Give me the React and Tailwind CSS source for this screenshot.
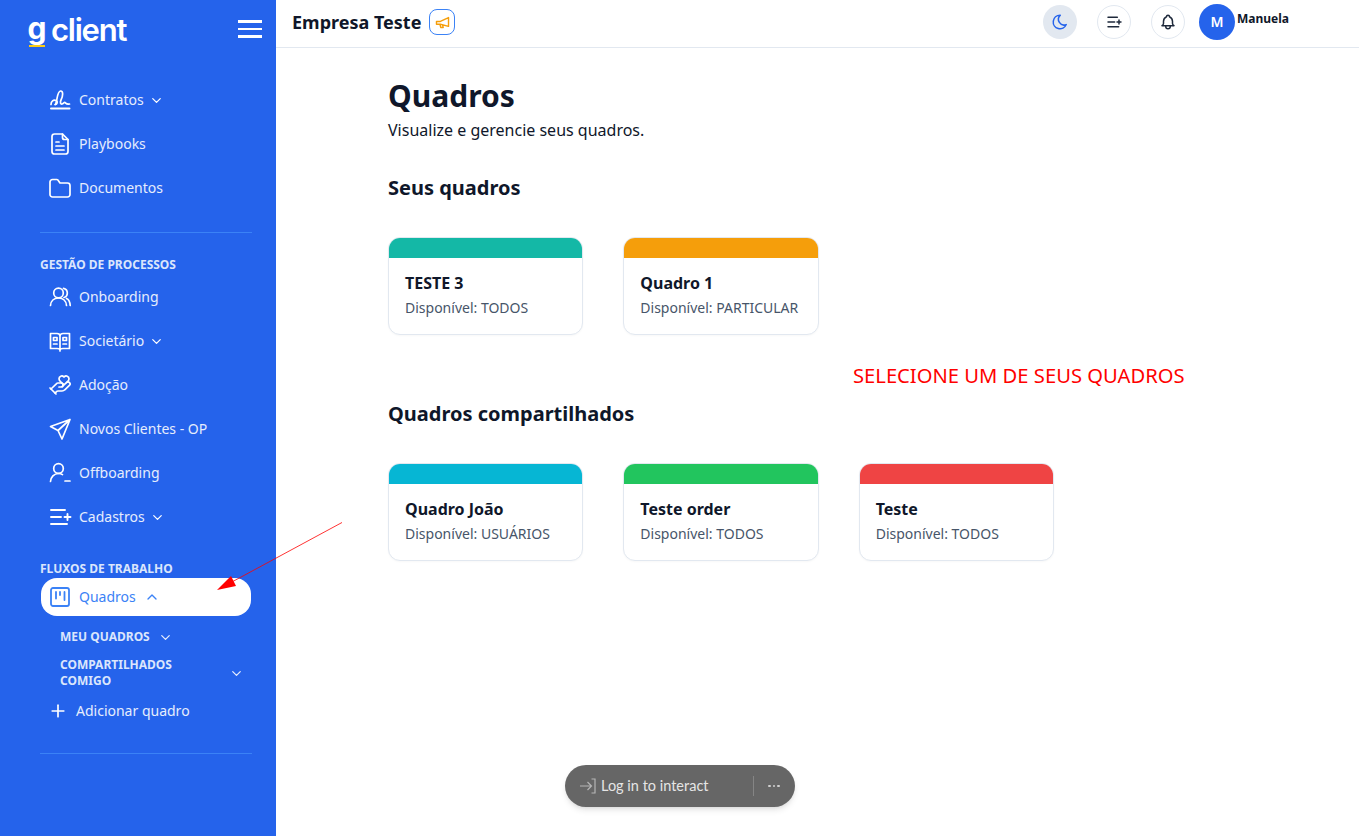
import React from "react";
import { TbChevronDown, TbChevronUp, TbPlus, TbMoon, TbBell } from "react-icons/tb";
import { HandHeart } from "lucide-react";

const font = { fontFamily: '"Noto Sans", sans-serif' };

function Svg({ size = 24, sw = 1.7, children, className = "" }) {
  return (
    <svg width={size} height={size} viewBox="0 0 24 24" fill="none" stroke="currentColor" strokeWidth={sw} strokeLinecap="round" strokeLinejoin="round" className={`shrink-0 ${className}`}>
      {children}
    </svg>
  );
}
const Signature = () => (
  <Svg>
    <path d="M3 16.500C3 13 5.500 11.500 8 12.500C10 13.500 9.500 16.500 7 16.500" />
    <path d="M7.500 16.500C9.500 12 9 3.500 12.500 3C15.500 2.700 15 8 13 12C12 14 12.500 16.500 14 16C15.500 15.500 16 14 17 14.500C18 15 18 16.500 21.500 16" />
    <path d="M3 20.500h18.500" strokeWidth="2" />
  </Svg>
);
const FileDoc = () => (
  <Svg>
    <path d="M14.500 2H6.500a2.500 2.500 0 0 0-2.500 2.500v15A2.500 2.500 0 0 0 6.500 22h11a2.500 2.500 0 0 0 2.500-2.500V7.500z" />
    <path d="M14.500 2v3.500a2 2 0 0 0 2 2H20M8 10h3M8 14h8M8 18h8" />
  </Svg>
);
const Folder = () => (
  <Svg>
    <path d="M2 6a2.500 2.500 0 0 1 2.500-2.500h4.200a1.500 1.500 0 0 1 1.200.6L12 7h7.500A2.500 2.500 0 0 1 22 9.500v9a2.500 2.500 0 0 1-2.500 2.500h-15A2.500 2.500 0 0 1 2 18.500z" />
  </Svg>
);
const Users = () => (
  <Svg>
    <circle cx="10.500" cy="8" r="4.800" />
    <path d="M2.500 20.500c.3-4.500 3.500-7.500 8-7.500s7.700 3 8 7.500" />
    <path d="M15.500 3.300c2.500.5 3.800 2.400 3.800 4.700s-1.300 4-3.300 4.500M18.500 13.500c2.400 1 3.500 3.500 3.700 7" />
  </Svg>
);
const Book = () => (
  <Svg>
    <path d="M2.500 4.500h6.500c1.500 0 3 .8 3 2.500 0-1.700 1.500-2.500 3-2.500h6.500v15H15c-1.500 0-3 .4-3 1.500 0-1.100-1.500-1.500-3-1.500H2.500zM12 7v15" />
    <path d="M5.500 8.500h3.500v3H5.500zM5.500 15h3.500M15 8.500h3.500v3H15zM15 15h3.500" />
  </Svg>
);
const Send = () => (
  <Svg>
    <path d="M22 2.500 2.500 9.500l7.500 4 4 8.500zM22 2.500 10 13.500" />
  </Svg>
);
const UserMinus = () => (
  <Svg>
    <circle cx="10.500" cy="7.500" r="4.800" />
    <path d="M2.500 20.500c.3-4.500 3.500-8 8-8 1.500 0 2.900.4 4 1.100M17 20h5" />
  </Svg>
);
const ListAdd = ({ size = 24, sw = 1.900 }) => (
  <Svg size={size} sw={sw}>
    <path d="M3 5h14M3 12h10M3 19h16M16.500 12h6M19.500 9v6" />
  </Svg>
);
const Kanban = () => (
  <Svg sw={1.800}>
    <rect x="3" y="3" width="18" height="18" rx="2" />
    <path d="M8 7v6.500M12 7v3M16.500 7v8" />
  </Svg>
);
const Megaphone = () => (
  <Svg size={17} sw={2}>
    <path d="M20.500 5v12.500L9 14.500H3.500v-4H9zM8.500 14.800l1 4.200h3.500l-.8-3" />
  </Svg>
);
const Hand = () => <HandHeart size={24} strokeWidth={1.700} className="shrink-0" />;

function NavItem({ icon: Icon, label, chevron }) {
  return (
    <div className="flex h-11 items-center pl-2 text-sm text-[#e6edfd]">
      <span className="text-white"><Icon /></span>
      <span className="ml-[7px]">{label}</span>
      {chevron && <TbChevronDown size={15} className="ml-[5px] text-white" />}
    </div>
  );
}

function Board({ color, title, sub }) {
  return (
    <div className="h-[98px] overflow-hidden rounded-xl border border-[#e2e8f0] bg-white shadow-[0_1px_2px_rgba(0,0,0,0.03)]">
      <div className={`h-5 ${color}`} />
      <div className="px-4 pt-[13px]">
        <div className="text-base leading-6 font-bold text-[#0f172a]">{title}</div>
        <div className="mt-[3px] text-sm leading-5 text-[#475569]">{sub}</div>
      </div>
    </div>
  );
}

function RoundBtn({ children, active }) {
  return (
    <div className={`flex h-[34px] w-[34px] items-center justify-center rounded-full ${active ? "bg-[#e2e8f0] text-[#2563eb]" : "border border-[#e2e8f0] bg-white text-[#1e293b]"}`}>
      {children}
    </div>
  );
}

export default function App() {
  return (
    <div style={font} className="relative flex h-[836px] w-full overflow-hidden bg-white">
      <aside className="flex h-full w-[276px] shrink-0 flex-col bg-[#2563eb]">
        <div className="flex h-[60px] items-center justify-between pr-[14px] pl-[29px]">
          <div className="flex items-start text-white" style={{ fontFamily: "Inter, sans-serif" }}>
            <span className="relative mr-[6px] flex h-8 w-[16px] justify-center text-[30px] leading-[28px] font-bold">
              g
              <span className="absolute top-[31px] left-0 h-[2px] w-full bg-[#facc15]" />
            </span>
            <span className="text-[31px] leading-8 font-semibold tracking-[-0.04em]">client</span>
          </div>
          <div className="-mt-[2px] flex w-6 flex-col gap-[5px]">
            <span className="h-[2.5px] bg-white" />
            <span className="h-[2.5px] bg-white" />
            <span className="h-[2.5px] bg-white" />
          </div>
        </div>

        <nav className="mt-[18px] px-10">
          <NavItem icon={Signature} label="Contratos" chevron />
          <NavItem icon={FileDoc} label="Playbooks" />
          <NavItem icon={Folder} label="Documentos" />
          <div className="mt-[22px] h-px w-[212px] bg-[#3b82f6]" />
          <div className="mt-6 text-xs leading-4 font-bold text-[#dbe6fc]">GESTÃO DE PROCESSOS</div>
          <div className="mt-[2px]">
            <NavItem icon={Users} label="Onboarding" />
            <NavItem icon={Book} label="Societário" chevron />
            <NavItem icon={Hand} label="Adoção" />
            <NavItem icon={Send} label="Novos Clientes - OP" />
            <NavItem icon={UserMinus} label="Offboarding" />
            <NavItem icon={ListAdd} label="Cadastros" chevron />
          </div>
          <div className="mt-[22px] text-xs leading-4 font-bold text-[#dbe6fc]">FLUXOS DE TRABALHO</div>
          <div className="mt-[1px] ml-px flex h-[38px] w-[210px] items-center rounded-2xl bg-white pl-[7px] text-sm text-[#3b82f6]">
            <Kanban />
            <span className="ml-[7px]">Quadros</span>
            <TbChevronUp size={16} className="ml-[8px]" />
          </div>
          <div className="mt-[9px] flex h-6 items-center pl-5 text-xs font-bold text-[#dbe6fc]">
            MEU QUADROS
            <TbChevronDown size={15} className="ml-2 text-[#e6edfd]" />
          </div>
          <div className="mt-2 -mr-2 flex items-center justify-between pl-5 text-xs leading-4 font-bold text-[#dbe6fc]">
            <span className="w-[130px]">COMPARTILHADOS COMIGO</span>
            <TbChevronDown size={15} className="text-[#e6edfd]" />
          </div>
          <div className="flex h-11 items-center pl-[8px] text-sm text-[#e6edfd]">
            <TbPlus size={20} className="text-white" />
            <span className="ml-[8px]">Adicionar quadro</span>
          </div>
          <div className="mt-[20px] h-px w-[212px] bg-[#3b82f6]" />
        </nav>
      </aside>

      <div className="flex min-w-0 flex-1 flex-col">
        <header className="flex h-[48px] items-center border-b border-[#e2e8f0] pr-[70px] pb-[3px] pl-4">
          <span className="text-lg font-bold text-[#0f172a]">Empresa Teste</span>
          <div className="ml-2 flex h-[26px] w-[26px] items-center justify-center rounded-lg border border-[#3b82f6] text-[#f59e0b]">
            <Megaphone />
          </div>
          <div className="ml-auto flex items-center gap-5">
            <RoundBtn active><TbMoon size={18} /></RoundBtn>
            <RoundBtn><ListAdd size={16} sw={2.200} /></RoundBtn>
            <RoundBtn><TbBell size={18} /></RoundBtn>
            <div className="-ml-1.5 flex h-9 items-start">
              <div className="flex h-9 w-9 items-center justify-center rounded-full bg-[#2563eb] text-sm font-semibold text-white">M</div>
              <span className="mt-[7px] ml-[2px] text-xs leading-4 font-bold text-[#0f172a]">Manuela</span>
            </div>
          </div>
        </header>

        <main className="pl-[112px]">
          <h1 className="mt-[28px] text-3xl leading-10 font-bold text-[#0f172a]">Quadros</h1>
          <p className="mt-[2px] text-base leading-6 text-[#0f172a]">Visualize e gerencie seus quadros.</p>
          <h2 className="mt-[32px] text-xl leading-7 font-bold text-[#0f172a]">Seus quadros</h2>
          <div className="mt-[35px] grid w-[666px] grid-cols-3 gap-10">
            <Board color="bg-[#14b8a6]" title="TESTE 3" sub="Disponível: TODOS" />
            <Board color="bg-[#f59e0b]" title="Quadro 1" sub="Disponível: PARTICULAR" />
          </div>
          <h2 className="mt-[65px] text-xl leading-7 font-bold text-[#0f172a]">Quadros compartilhados</h2>
          <div className="mt-[35px] grid w-[666px] grid-cols-3 gap-10">
            <Board color="bg-[#06b6d4]" title="Quadro João" sub="Disponível: USUÁRIOS" />
            <Board color="bg-[#22c55e]" title="Teste order" sub="Disponível: TODOS" />
            <Board color="bg-[#ef4444]" title="Teste" sub="Disponível: TODOS" />
          </div>
        </main>
      </div>

      {/* annotations over the page */}
      <div className="absolute top-[361px] left-[853px] text-[20.2px] leading-7 whitespace-nowrap text-[#ff0000]">SELECIONE UM DE SEUS QUADROS</div>
      <svg className="pointer-events-none absolute top-[515px] left-[210px]" width="140" height="80" viewBox="210 515 140 80">
        <line x1="342" y1="522.500" x2="230" y2="583" stroke="#ff0000" strokeWidth="0.800" />
        <polygon points="217,590 231,576 236,586" fill="#ff0000" />
      </svg>

      {/* floating pill */}
      <div className="absolute top-[765px] left-[565px] flex h-[42px] w-[230px] items-center rounded-full bg-[#666666] pl-[14px] text-[#e5e5e5] shadow-md" style={{ fontFamily: "Lato, sans-serif" }}>
        <svg width="18" height="18" viewBox="0 0 18 18" fill="none" stroke="#b5b5b5" strokeWidth="1.200">
          <path d="M1 9h11M8.500 5l4 4-4 4M12.500 2H16v14h-3.500" />
        </svg>
        <span className="ml-[4px] w-[152px] text-[14.500px]">Log in to interact</span>
        <span className="h-5 w-px bg-[#858585]" />
        <span className="ml-[14px] flex gap-[2px]">
          <span className="h-[2.500px] w-[2.500px] rounded-full bg-[#d0d0d0]" />
          <span className="h-[2.500px] w-[2.500px] rounded-full bg-[#d0d0d0]" />
          <span className="h-[2.500px] w-[2.500px] rounded-full bg-[#d0d0d0]" />
        </span>
      </div>
    </div>
  );
}
